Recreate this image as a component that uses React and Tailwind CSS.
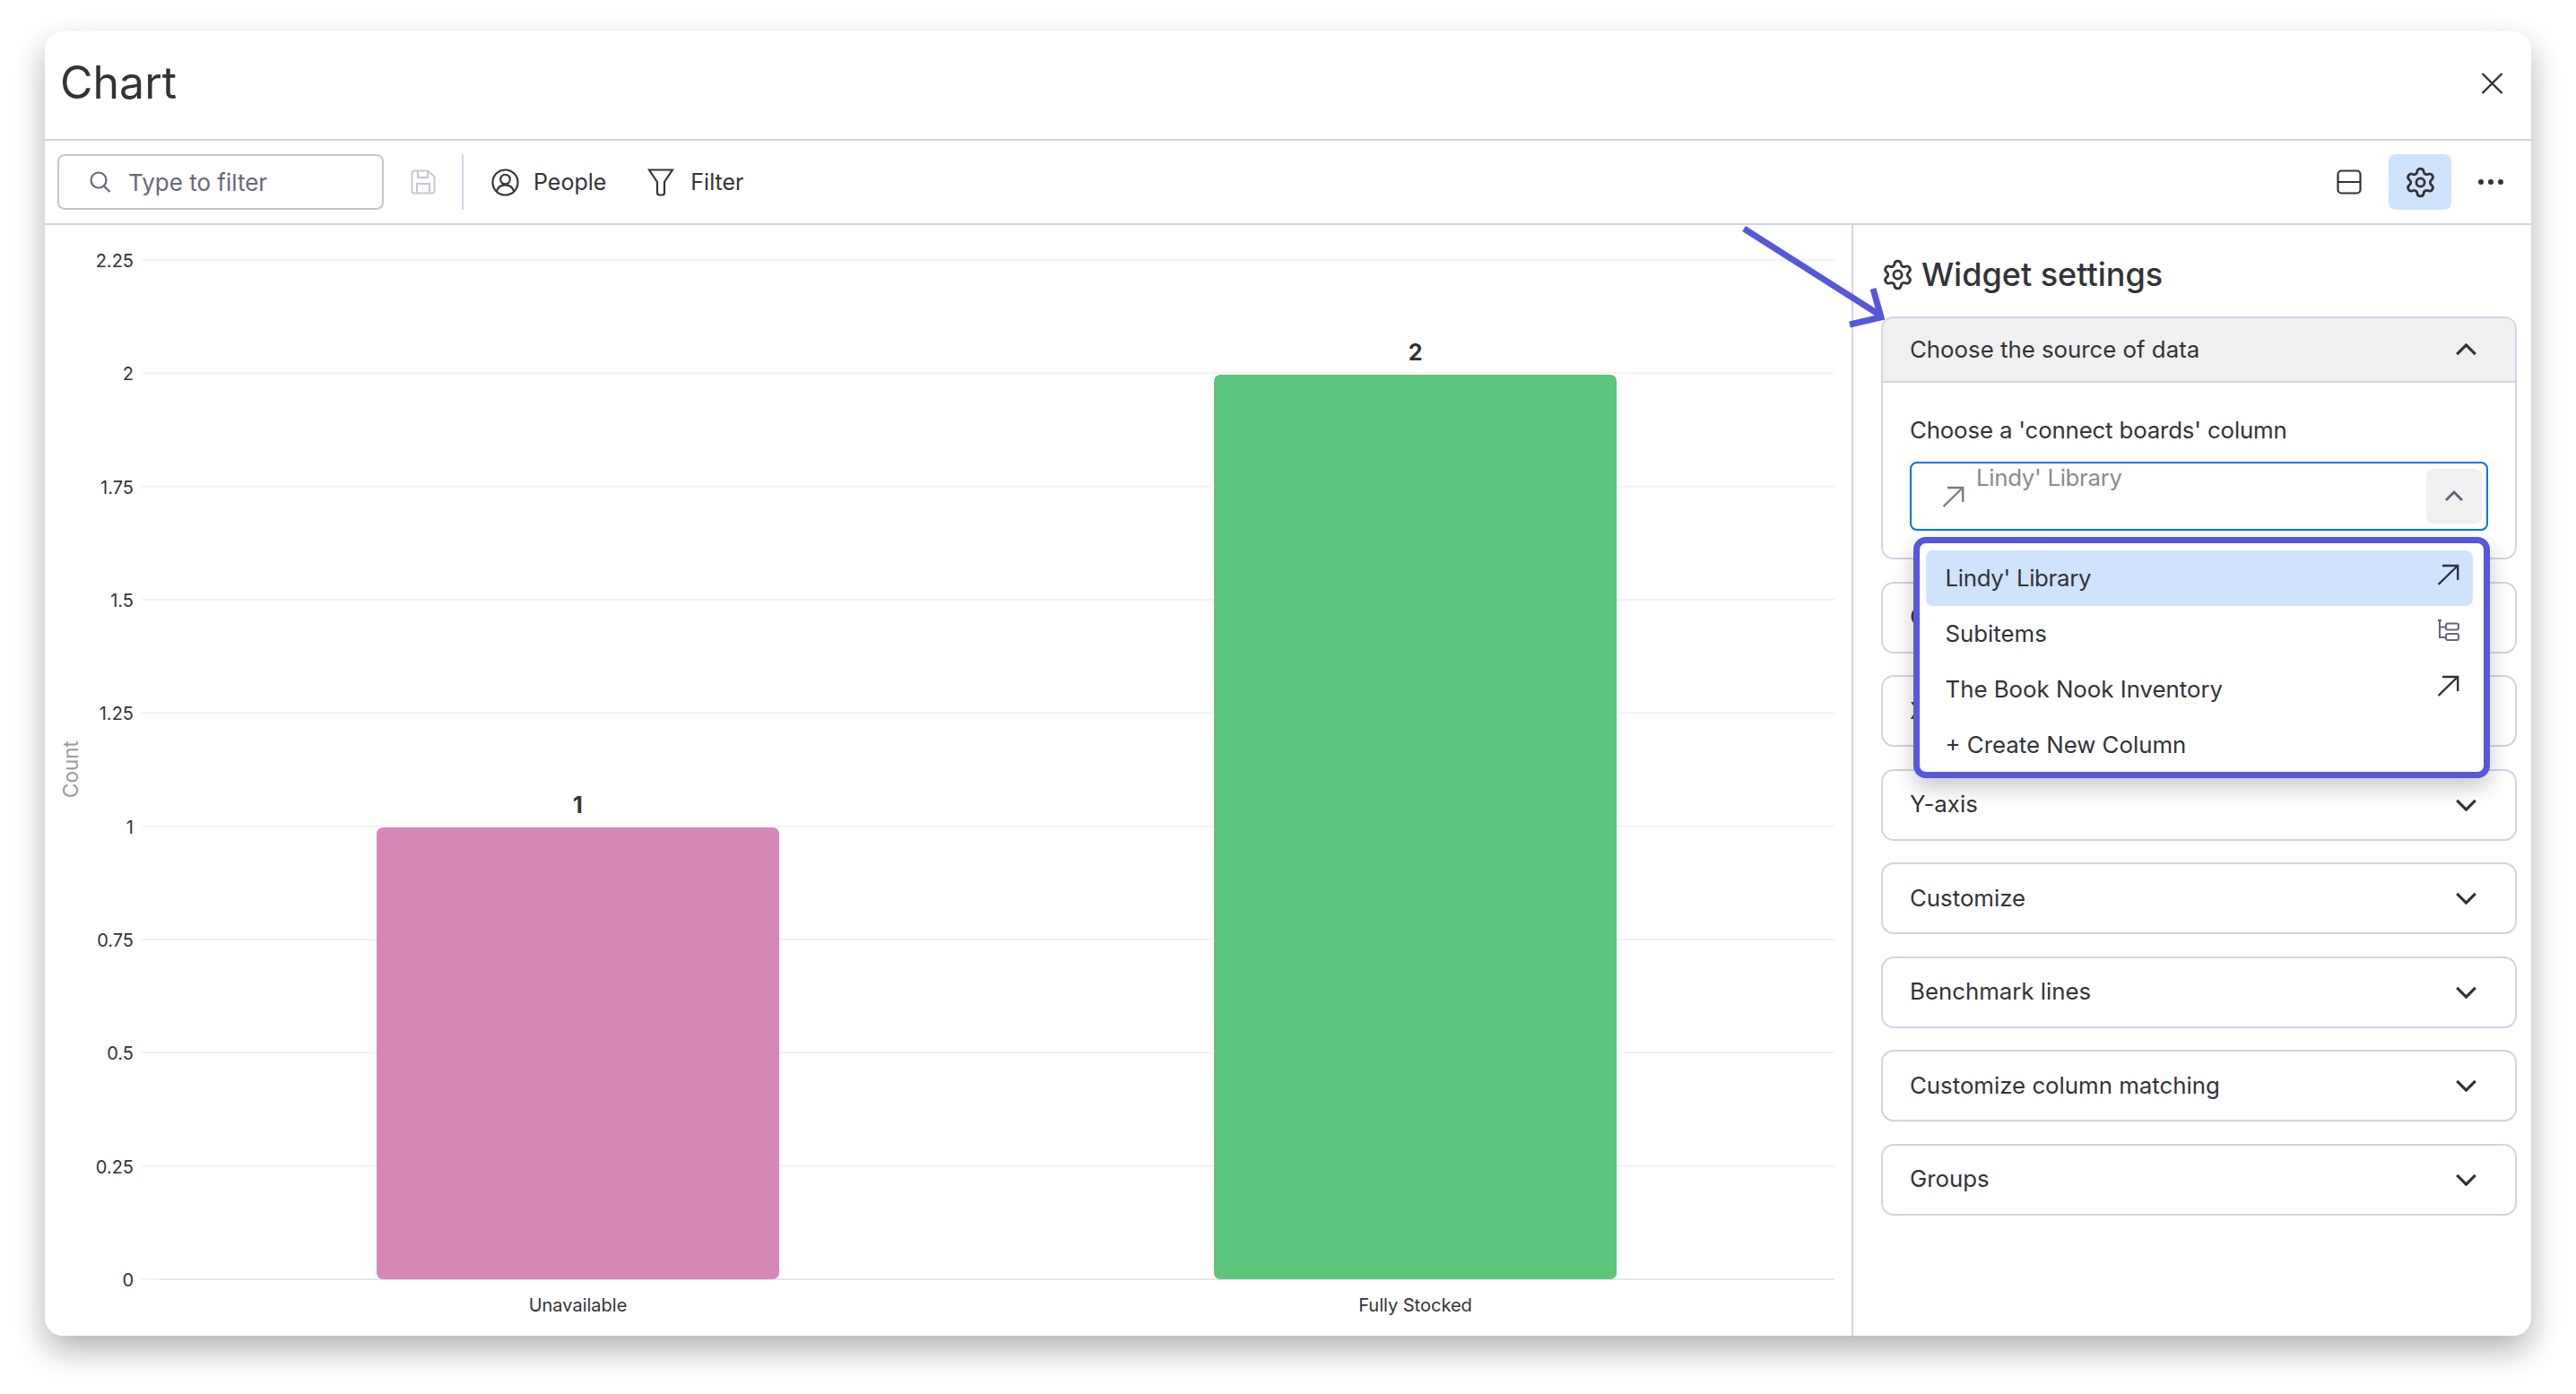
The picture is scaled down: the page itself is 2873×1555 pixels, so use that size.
import { Settings } from 'lucide-react';

const ticks = ['0', '0.25', '0.5', '0.75', '1', '1.25', '1.5', '1.75', '2', '2.25'];
const bars = [
  { name: 'Unavailable', value: 1, x: 420, top: 923, color: '#d688b7' },
  { name: 'Fully Stocked', value: 2, x: 1354, top: 418, color: '#5cc67d' },
];
const closedSections = ['Chart type', 'X-axis', 'Y-axis', 'Customize', 'Benchmark lines', 'Customize column matching', 'Groups'];

function Chevron({ up = false }) {
  return (
    <svg viewBox="0 0 26 15" className="h-[14px] w-[25px]" fill="none" stroke="#323338" strokeWidth="3.4">
      <polyline points={up ? '2,13 13,2 24,13' : '2,2 13,13 24,2'} />
    </svg>
  );
}

function ArrowNE({ color = '#323338' }) {
  return (
    <svg viewBox="0 0 25 24" className="h-[24px] w-[25px]" fill="none" stroke={color} strokeWidth="2.4">
      <path d="M1.5 23 L23 2 M6 2 H23.2 V18" />
    </svg>
  );
}

function Chart() {
  const yFor = (i) => 1427 - i * 126.33;
  return (
    <svg viewBox="50 251 2015 1239" className="block h-full w-full">
      {ticks.map((t, i) => (
        <g key={t}>
          <line x1="158" x2="2046" y1={yFor(i)} y2={yFor(i)} stroke="#f3f3f5" strokeWidth="2" />
          <text x="149" y={yFor(i) + 8} textAnchor="end" className="fill-[#323338] text-[20px]">
            {t}
          </text>
        </g>
      ))}
      <line x1="177" x2="2046" y1="1427" y2="1427" stroke="#e6e7ee" strokeWidth="2" />
      <text transform="translate(87 858) rotate(-90)" textAnchor="middle" className="fill-[#9a9a9a] text-[22.5px]">
        Count
      </text>
      {bars.map((b) => (
        <g key={b.name}>
          <rect x={b.x} y={b.top} width="449" height={1427 - b.top} rx="7" fill={b.color} />
          <text x={b.x + 224.5} y={b.top - 16} textAnchor="middle" className="fill-[#323338] text-[25px] font-bold">
            {b.value}
          </text>
          <text x={b.x + 224.5} y="1463" textAnchor="middle" className="fill-[#323338] text-[20px]">
            {b.name}
          </text>
        </g>
      ))}
    </svg>
  );
}

function Toolbar() {
  return (
    <div className="flex h-[94px] items-center border-b-2 border-[#d0d4e4] pl-[14px] pr-[31px]">
      <div className="flex h-[62px] w-[364px] items-center rounded-lg border-2 border-[#c3c6d4] pl-[34px]">
        <svg viewBox="0 0 24 24" className="h-[24px] w-[24px]" fill="none" stroke="#676879" strokeWidth="2.2">
          <circle cx="10" cy="10" r="8.5" />
          <path d="M16 16.5 L22.5 23" />
        </svg>
        <span className="ml-[19px] text-[26px] text-[#676879]">Type to filter</span>
      </div>
      <svg viewBox="0 0 28 28" className="ml-[30px] h-[28px] w-[28px]" fill="none" stroke="#c5c7d0" strokeWidth="2">
        <path d="M4 1.5 H19 L26.5 8 V24 a2.5 2.5 0 0 1 -2.5 2.5 H4 a2.5 2.5 0 0 1 -2.5 -2.5 V4 A2.5 2.5 0 0 1 4 1.5 Z" />
        <path d="M8 1.5 V9 H19 V1.5 M7 26.5 V16 H21 V26.5" />
      </svg>
      <div className="ml-[29px] h-[62px] w-[2px] bg-[#d0d4e4]" />
      <svg viewBox="0 0 32 32" className="ml-[31px] h-[31px] w-[31px]" fill="none" stroke="#323338" strokeWidth="2.2">
        <circle cx="16" cy="16" r="14.5" />
        <circle cx="16" cy="12.5" r="5.5" />
        <path d="M6 26 C8 20.5 11 19 16 19 C21 19 24 20.5 26 26" />
      </svg>
      <span className="ml-[16px] mt-[2px] text-[25px] text-[#323338]">People</span>
      <svg viewBox="0 0 30 31" className="ml-[46px] h-[31px] w-[30px]" fill="none" stroke="#323338" strokeWidth="2.2">
        <path d="M2 1.5 H28 L19 15 V27 a2.5 2.5 0 0 1 -2.5 2.5 H13.5 a2.5 2.5 0 0 1 -2.5 -2.5 V15 Z" />
      </svg>
      <span className="ml-[18px] mt-[2px] text-[25px] text-[#323338]">Filter</span>
      <svg viewBox="0 0 28 28" className="ml-auto h-[28px] w-[28px]" fill="none" stroke="#323338" strokeWidth="2.2">
        <rect x="1.5" y="1.5" width="25" height="25" rx="4" />
        <path d="M1.5 14 H26.5" />
      </svg>
      <div className="ml-[30px] flex h-[62px] w-[70px] items-center justify-center rounded-lg bg-[#cfe3fc]">
        <Settings size={37} strokeWidth={1.8} color="#323338" />
      </div>
      <div className="ml-[30px] flex items-center gap-[5px]">
        <span className="h-[6px] w-[6px] rounded-full bg-[#323338]" />
        <span className="h-[6px] w-[6px] rounded-full bg-[#323338]" />
        <span className="h-[6px] w-[6px] rounded-full bg-[#323338]" />
      </div>
    </div>
  );
}

function ColumnDropdown() {
  return (
    <div className="absolute left-[3.5px] top-[84px] z-10 h-[269px] w-[643px] rounded-[14px] border-[7px] border-[#5558dc] bg-white pl-[7px] pr-[12px] pt-[8px] shadow-[0_10px_24px_rgba(0,0,0,0.22)]">
      <div className="flex h-[62px] items-center justify-between rounded-lg bg-[#cfe3fc] pl-[22px] pr-[15px]">
        <span className="tracking-[-0.3px]">Lindy' Library</span>
        <span className="mb-[8px]">
          <ArrowNE />
        </span>
      </div>
      <div className="flex h-[62px] items-center justify-between pl-[22px] pr-[15px]">
        <span>Subitems</span>
        <svg viewBox="0 0 24 24" className="mb-[8px] h-[24px] w-[24px]" fill="none" stroke="#676879" strokeWidth="2">
          <path d="M0 1 H4 M2 1 V20 H9 M2 8.5 H9" />
          <rect x="9" y="4.5" width="14" height="7" rx="2" />
          <rect x="9" y="16" width="14" height="7" rx="2" />
        </svg>
      </div>
      <div className="flex h-[62px] items-center justify-between pl-[22px] pr-[15px]">
        <span>The Book Nook Inventory</span>
        <span className="mb-[8px]">
          <ArrowNE />
        </span>
      </div>
      <div className="flex h-[62px] items-center pl-[22px] pr-[15px]">
        <span>+ Create New Column</span>
      </div>
    </div>
  );
}

function WidgetSettings() {
  return (
    <div className="flex-1 border-l-2 border-[#d0d4e4] pl-[31px] pr-[16px]">
      <div className="mt-[30px] mb-[22px] flex h-[50px] items-center gap-[8px]">
        <Settings size={37} strokeWidth={1.8} color="#323338" />
        <h2 className="text-[36px] font-medium text-[#323338]">Widget settings</h2>
      </div>
      <div className="flex flex-col gap-[24.5px] text-[25.8px] text-[#323338]">
        <section className="h-[271px] rounded-[14px] border-2 border-[#d0d4e4]">
          <div className="flex h-[72px] items-center justify-between rounded-t-[12px] border-b-2 border-[#d0d4e4] bg-[#f0f0f0] pl-[30px] pr-[42px]">
            <span>Choose the source of data</span>
            <Chevron up />
          </div>
          <div className="px-[30px] pt-[35px]">
            <p className="mb-[17px] h-[36px] leading-[36px] tracking-[-0.15px]">Choose a 'connect boards' column</p>
            <div className="relative">
              <div className="flex h-[77px] rounded-lg border-2 border-[#0073ea] pl-[34px] pr-[5px]">
                <span className="self-center">
                  <ArrowNE color="#7c7c7c" />
                </span>
                <span className="ml-[13px] mt-[-1px] leading-[34px] tracking-[-0.3px] text-[#8a8a8a]">Lindy' Library</span>
                <div className="ml-auto flex h-[61px] w-[62px] items-center justify-center self-center rounded-lg bg-[#f0f0f0]">
                  <svg viewBox="0 0 22 13" className="h-[13px] w-[22px]" fill="none" stroke="#5f6070" strokeWidth="2.8">
                    <polyline points="2,11 11,2 20,11" />
                  </svg>
                </div>
              </div>
              <ColumnDropdown />
            </div>
          </div>
        </section>
        {closedSections.map((title) => (
          <div
            key={title}
            className="flex h-[80px] items-center justify-between rounded-[14px] border-2 border-[#d0d4e4] pl-[30px] pr-[42px]"
          >
            <span>{title}</span>
            <Chevron />
          </div>
        ))}
      </div>
    </div>
  );
}

export default function App() {
  return (
    <div className="relative h-[1555px] w-[2873px] overflow-hidden bg-white pl-[50px] pt-[35px] font-['Inter',sans-serif]">
      <div className="flex h-[1455px] w-[2773px] flex-col overflow-hidden rounded-[20px] bg-white shadow-[0_16px_36px_rgba(0,0,0,0.3)]">
        <header className="flex h-[122px] items-center justify-between border-b-2 border-[#d0d4e4] pb-[6px] pl-[17px] pr-[31px]">
          <h1 className="text-[50px] font-normal text-[#323338]">Chart</h1>
          <svg viewBox="0 0 25 24" className="mt-[2px] h-[24px] w-[25px]" fill="none" stroke="#323338" strokeWidth="2.4">
            <path d="M1.5 1 L23.5 23 M23.5 1 L1.5 23" />
          </svg>
        </header>
        <Toolbar />
        <div className="flex min-h-0 flex-1">
          <div className="h-full w-[2015px] shrink-0">
            <Chart />
          </div>
          <WidgetSettings />
        </div>
      </div>
      {/* annotation arrow, sits over the window */}
      <svg viewBox="0 0 170 120" className="absolute left-[1940px] top-[250px] h-[120px] w-[170px]" fill="none" stroke="#5558dc" strokeWidth="7">
        <path d="M5 5 L156 101" />
        <path d="M149 72 L158 104 L123 112" strokeLinejoin="miter" />
      </svg>
    </div>
  );
}
